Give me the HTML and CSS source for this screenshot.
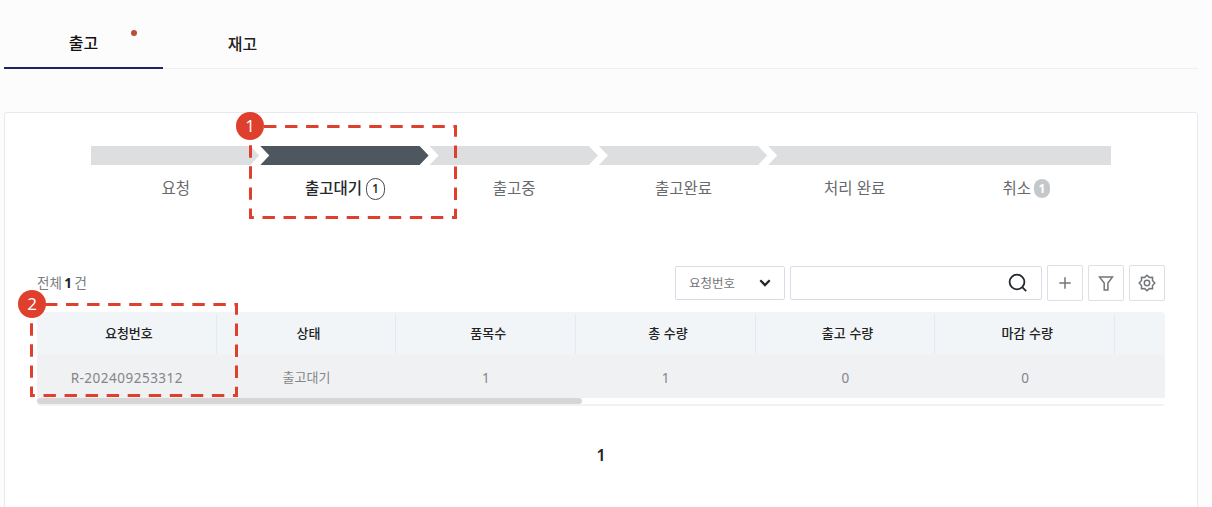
FILE: index.html
```html
<!DOCTYPE html>
<html lang="ko">
<head>
<meta charset="utf-8">
<title>출고</title>
<link rel="stylesheet" href="styles.css">
</head>
<body>
<div class="page">
  <nav class="tabs">
    <a class="tab tab-active">출고<span class="tab-dot"></span></a>
    <a class="tab">재고</a>
  </nav>
  <main class="panel">
    <ol class="steps">
      <li class="step"><span class="bar bar-first"></span><span class="step-label">요청</span></li>
      <li class="step step-current"><span class="bar"></span><span class="step-label">출고대기<b class="count count-ring">1</b></span></li>
      <li class="step"><span class="bar"></span><span class="step-label">출고중</span></li>
      <li class="step"><span class="bar"></span><span class="step-label">출고완료</span></li>
      <li class="step"><span class="bar bar-open"></span><span class="step-label">처리 완료</span></li>
      <li class="step"><span class="bar bar-last"></span><span class="step-label">취소<b class="count">1</b></span></li>
    </ol>
    <div class="toolbar">
      <span class="total">전체 <b>1</b> 건</span>
      <div class="select">요청번호
        <svg width="12" height="8" viewBox="0 0 12 8"><path d="M1.3 1.3 6 6l4.700-4.700" fill="none" stroke="#24282c" stroke-width="2.300"/></svg>
      </div>
      <div class="search">
        <svg width="20" height="20" viewBox="0 0 20 20" fill="none" stroke="#24282c" stroke-width="1.800"><circle cx="9" cy="9" r="7.400"/><path d="m14.200 14.200 4 4"/></svg>
      </div>
      <button class="tool"><svg width="12" height="12" viewBox="0 0 12 12"><path d="M6 .3v11.400M.3 6h11.400" stroke="#737679" stroke-width="1.500"/></svg></button>
      <button class="tool"><svg width="16" height="16" viewBox="0 0 16 16"><path d="M1.400 1.900h13.200L9.900 8v7H6.200V8Z" fill="none" stroke="#737679" stroke-width="1.500"/></svg></button>
      <button class="tool"><svg width="18" height="18" viewBox="0 0 18 18" fill="none" stroke="#737679" stroke-width="1.500"><path d="m9 1.200 2.300 2.200 3.200-.1v3.200L16.800 9l-2.300 2.500v3.200l-3.200-.1L9 16.800l-2.300-2.200-3.200.1v-3.200L1.200 9l2.300-2.500V3.300l3.200.1Z"/><circle cx="9" cy="9" r="2.700"/></svg></button>
    </div>
    <section class="table">
      <div class="row head">
        <span class="cell">요청번호</span><span class="cell">상태</span><span class="cell">품목수</span><span class="cell">총 수량</span><span class="cell">출고 수량</span><span class="cell">마감 수량</span><span class="rest"></span>
      </div>
      <div class="row data">
        <span class="cell num">R-202409253312</span><span class="cell">출고대기</span><span class="cell num">1</span><span class="cell num">1</span><span class="cell num">0</span><span class="cell num">0</span>
      </div>
      <div class="scroll"><span class="thumb"></span></div>
    </section>
    <div class="pager">1</div>
  </main>
  <svg class="marks" width="1212" height="507" fill="none" stroke="#df402e" stroke-width="3">
    <path stroke-dasharray="12.400 8.650" d="M264 126.500H455.500V217.500H250.500V126.500"/>
    <path stroke-dasharray="12.400 8.650" d="M45 304.500H236.500V395.500H31.500V304.500"/>
  </svg>
  <span class="badge badge-one">1</span>
  <span class="badge badge-two">2</span>
</div>
</body>
</html>
```

FILE: styles.css
```css
* { box-sizing: border-box; }
body { margin: 0; background: #fcfcfc; font-family: "Noto Sans CJK KR", sans-serif; color: #222; }
.page { position: relative; width: 1212px; height: 507px; overflow: hidden; padding: 0 14px 0 4px; }
.tabs { display: flex; height: 69px; border-bottom: 1px solid #eeeff1; }
.tab { position: relative; width: 159px; height: 69px; padding-top: 18px; text-align: center; font-size: 16px; line-height: 50px; font-weight: 500; color: #222; }
.tab-active { padding-top: 17px; border-bottom: 2px solid #1c2562; color: #111; }
.tab-dot { position: absolute; left: 127px; top: 30px; width: 6px; height: 6px; border-radius: 50%; background: #c04a38; }
.panel { margin-top: 43px; height: 420px; padding: 33px 32px 0; border: 1px solid #e6e9ef; border-radius: 3px; background: #fff; }

.steps { display: grid; grid-template-columns: 169.300px 169.300px 169.300px 169.300px 173px 170px; margin: 0 0 0 54px; padding: 0; list-style: none; }
.bar { display: block; height: 19px; margin-right: 1px; background: #dddee0; clip-path: polygon(0 0, calc(100% - 9px) 0, 100% 50%, calc(100% - 9px) 100%, 0 100%, 9px 50%); }
.bar-first { clip-path: polygon(0 0, calc(100% - 9px) 0, 100% 50%, calc(100% - 9px) 100%, 0 100%); }
.bar-open { margin-right: 0; clip-path: polygon(0 0, 100% 0, 100% 100%, 0 100%, 9px 50%); }
.bar-last { margin-right: 0; clip-path: none; }
.step-current .bar { background: #4e565f; }
.step-label { display: flex; justify-content: center; align-items: center; gap: 3px; height: 30px; margin-top: 7px; font-size: 15.500px; color: #67696c; white-space: pre; }
.step-current .step-label { gap: 4px; color: #24282c; font-weight: 500; }
.count { display: flex; align-items: center; justify-content: center; width: 16px; height: 19px; margin-top: 3px; border-radius: 8px; background: #c5c8ca; color: #fff; font: 700 12px/17px "Open Sans", sans-serif; }
.count-ring { width: 19px; height: 22px; border: 1px solid #45494d; border-radius: 10px; background: none; color: #24282c; font-weight: 600; }

.toolbar { display: flex; align-items: center; height: 36px; margin-top: 63px; }
.total { margin: -2px auto 0 0; font-size: 13.500px; color: #7a7c7f; word-spacing: -1.300px; }
.total b { font-family: "Open Sans", sans-serif; color: #222; }
.select { display: flex; align-items: center; justify-content: space-between; width: 110px; height: 34px; padding: 0 13px 1px 13px; margin-right: 5px; border: 1px solid #d8dce6; border-radius: 2px; font-size: 12.500px; color: #737578; }
.search { display: flex; align-items: center; justify-content: flex-end; width: 252px; height: 34px; padding-right: 13px; margin-right: 5px; border: 1px solid #d8dce6; border-radius: 2px; }
.tool { display: flex; align-items: center; justify-content: center; width: 36px; height: 36px; margin-left: 5px; padding: 0; border: 1px solid #dedfe3; border-radius: 2px; background: #fff; }
.search + .tool { margin-left: 0; }

.table { margin-top: 11px; height: 94px; border-bottom: 2px solid #f2f2f4; border-radius: 4px; overflow: hidden; }
.row { display: flex; height: 43px; font-size: 13px; }
.cell { display: flex; align-items: center; justify-content: center; flex: none; width: 179.700px; }
.head { padding: 2px 0 1px; background: #f1f5f8; color: #222; font-weight: 500; font-size: 13px; }
.head .cell { padding: 0 0 4px 5px; border-right: 1px solid #e3ebf2; }
.data { height: 43px; background: #f0f1f3; color: #838587; }
.num { padding-top: 2px; font-family: "Noto Sans", sans-serif; font-size: 13.500px; letter-spacing: .5px; }
.scroll { height: 6px; }
.thumb { display: block; width: 545px; height: 6px; border-radius: 3px; background: #d6d6d6; }
.pager { margin-top: 37px; text-align: center; font: 600 16px/24px "Noto Sans", sans-serif; color: #222; }

.marks { position: absolute; left: 0; top: 0; }
.badge { position: absolute; width: 28px; height: 28px; border-radius: 50%; background: #df402e; color: #fff; text-align: center; font: 17px/28px "Open Sans", sans-serif; }
.badge-one { left: 236px; top: 112px; }
.badge-two { left: 18px; top: 290px; }
```
